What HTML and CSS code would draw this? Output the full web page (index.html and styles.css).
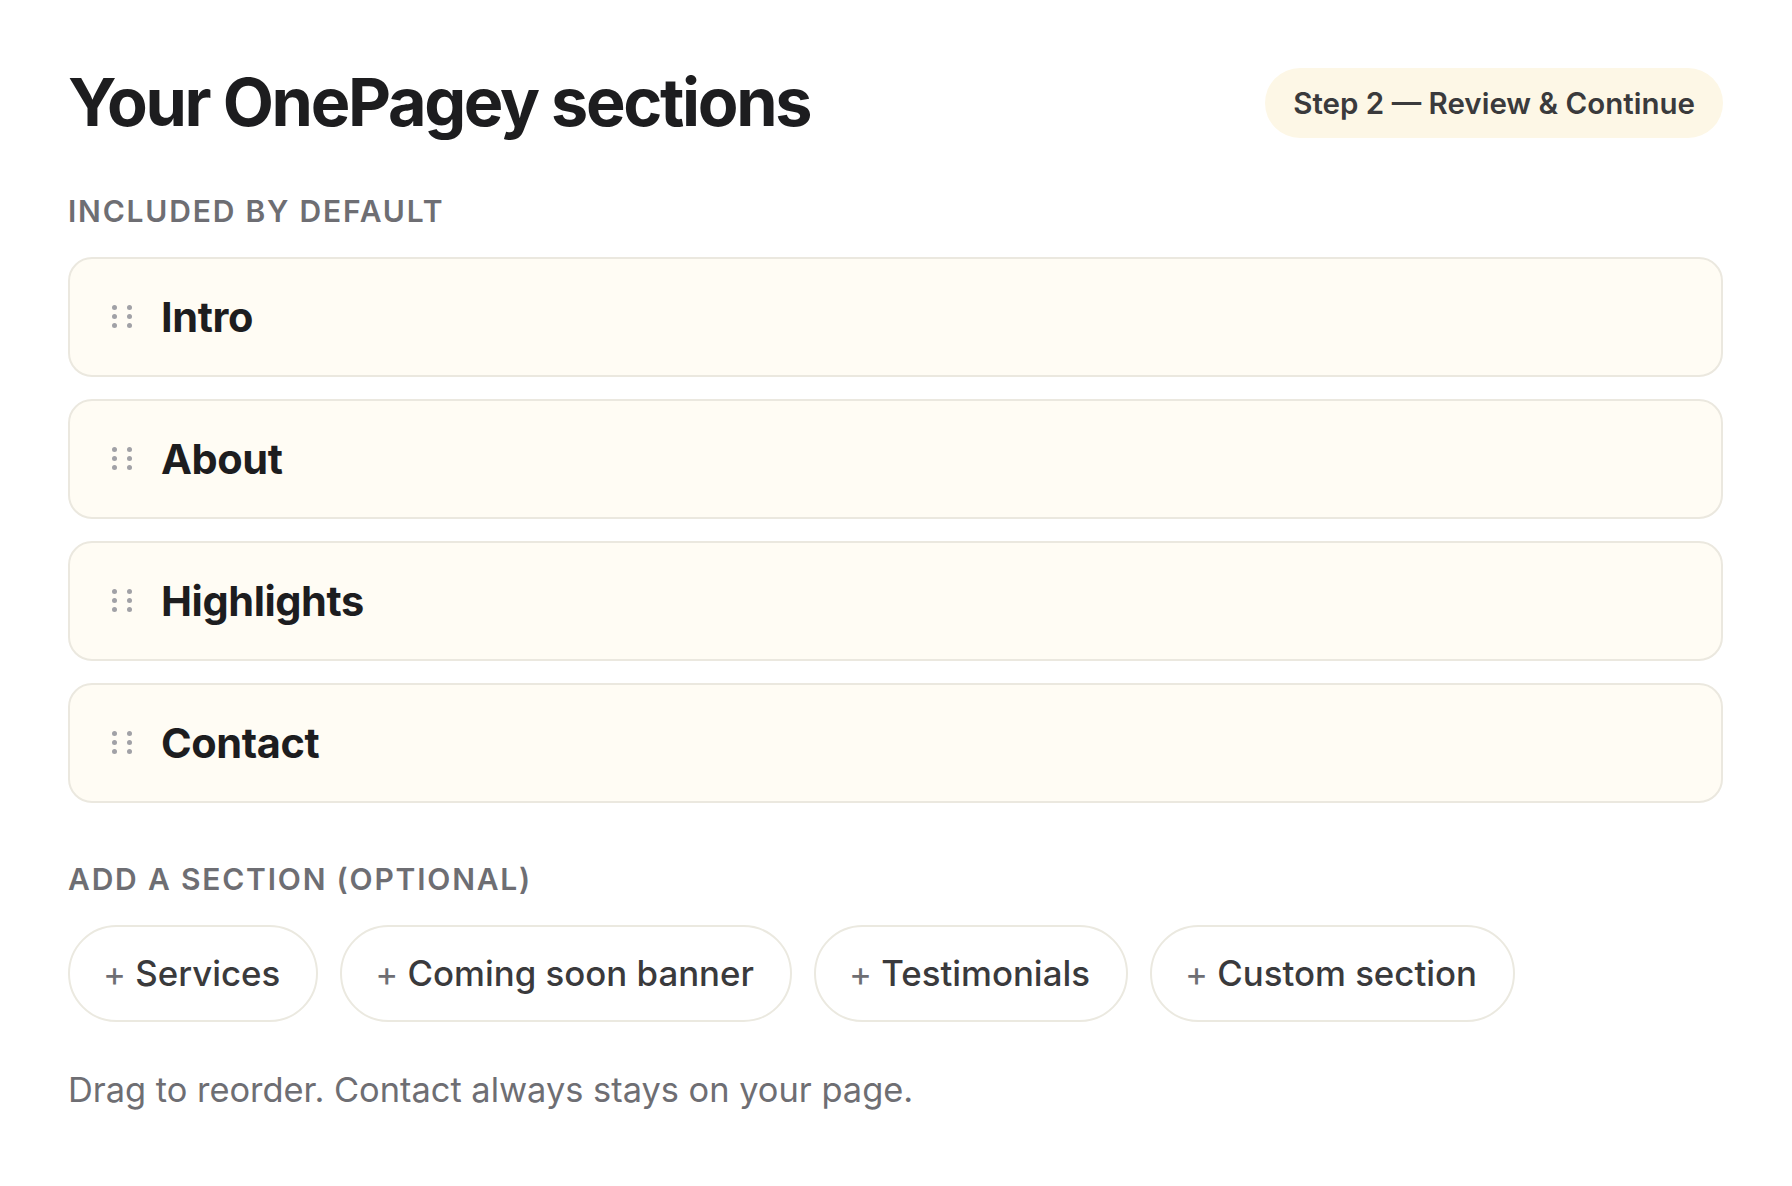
FILE: index.html
```html
<!DOCTYPE html>
<html>

<head>
    <meta charset="utf-8">
    <meta name="viewport" content="width=device-width">
    <title>Your OnePagey sections</title>

    <link rel="stylesheet" href="styles.css">

</head>

<body>
    <div id="wrapper">
        <header class="top">
            <h1>Your OnePagey sections</h1>
            <span class="step">Step 2 — Review &amp; Continue</span>
        </header>

        <h2 class="label">Included by default</h2>

        <ul class="sections">
            <li class="section">
                <span class="handle"><i></i><i></i><i></i><i></i><i></i><i></i></span>
                <span class="name">Intro</span>
            </li>
            <li class="section">
                <span class="handle"><i></i><i></i><i></i><i></i><i></i><i></i></span>
                <span class="name">About</span>
            </li>
            <li class="section">
                <span class="handle"><i></i><i></i><i></i><i></i><i></i><i></i></span>
                <span class="name">Highlights</span>
            </li>
            <li class="section">
                <span class="handle"><i></i><i></i><i></i><i></i><i></i><i></i></span>
                <span class="name">Contact</span>
            </li>
        </ul>

        <h2 class="label label-add">Add a section (optional)</h2>

        <div class="extras">
            <button class="pill"><span class="plus">+</span> Services</button>
            <button class="pill"><span class="plus">+</span> Coming soon banner</button>
            <button class="pill"><span class="plus">+</span> Testimonials</button>
            <button class="pill"><span class="plus">+</span> Custom section</button>
        </div>

        <p class="note">Drag to reorder. Contact always stays on your page.</p>
    </div>
</body>

</html>
```

FILE: styles.css
```css
html {
    font-family: Inter, "Noto Sans", sans-serif;
}

body {
    margin: 0;
    background-color: #fff;
    color: #1d1d1f;
}

#wrapper {
    padding: 63px 69px 40px 68px;
}

.top {
    display: flex;
    align-items: center;
    justify-content: space-between;
}

h1 {
    margin: 0;
    font-size: 66.5px;
    font-weight: 700;
    letter-spacing: -0.035em;
    line-height: 1.2;
}

.step {
    background-color: #fdf7e6;
    color: #3a3a3c;
    font-size: 29.5px;
    font-weight: 600;
    padding: 18px 28px;
    border-radius: 40px;
    line-height: 34px;
}

.label {
    margin: 50px 0 28px;
    font-size: 30px;
    font-weight: 600;
    letter-spacing: 0.06em;
    text-transform: uppercase;
    color: #6e6e73;
    line-height: 36px;
}

.label-add {
    margin: 58px 0 28px;
}

.sections {
    list-style: none;
    margin: 0;
    padding: 0;
    display: flex;
    flex-direction: column;
    gap: 22px;
}

.section {
    height: 116px;
    box-sizing: content-box;
    display: flex;
    align-items: center;
    gap: 29px;
    padding: 0 42px;
    background-color: #fffcf4;
    border: 2px solid #ebe8df;
    border-radius: 24px;
}

.handle {
    display: grid;
    grid-template-columns: 5px 5px;
    column-gap: 10px;
    row-gap: 4px;
}

.handle i {
    width: 5px;
    height: 5px;
    border-radius: 50%;
    background-color: #a1a1a6;
}

.name {
    font-size: 41.5px;
    font-weight: 700;
    letter-spacing: -0.01em;
}

.extras {
    display: flex;
    gap: 22px;
}

.pill {
    font-family: inherit;
    font-size: 34.8px;
    font-weight: 500;
    color: #3a3a3c;
    background-color: #fff;
    border: 2px solid #ebe9e0;
    border-radius: 60px;
    padding: 0 36px 0 33px;
    height: 97px;
}

.plus {
    color: #6e6e73;
    font-weight: 400;
}

.note {
    margin: 48px 0 0;
    font-size: 34.4px;
    color: #6e6e73;
    line-height: 40px;
}
```
